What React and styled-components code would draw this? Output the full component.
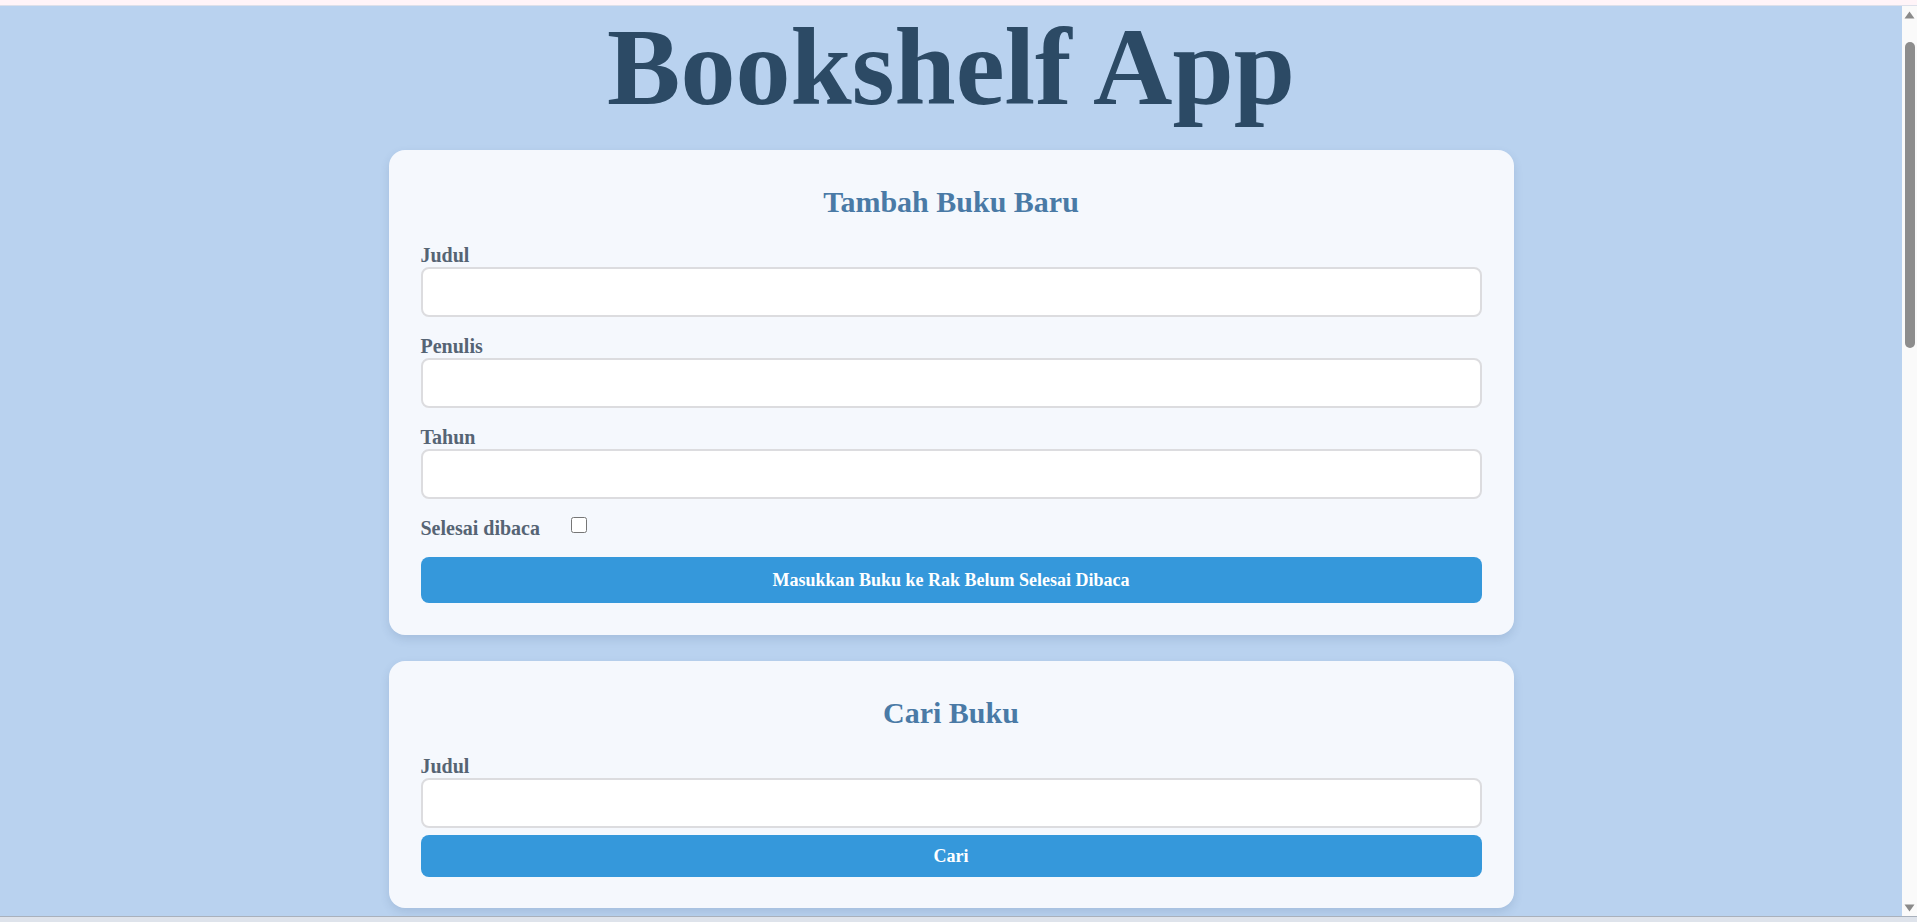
import React from "react";
import styled, { createGlobalStyle } from "styled-components";

const GlobalStyle = createGlobalStyle`
  html, body {
    margin: 0;
    padding: 0;
    height: 100%;
    overflow: hidden;
    background: #fff5f8;
  }
  body {
    font-family: "Liberation Serif", "Times New Roman", serif;
  }
  * { box-sizing: border-box; }
`;

const Frame = styled.div`
  display: flex;
  flex-direction: column;
  height: 100vh;
`;

const TopStrip = styled.div`
  flex: 0 0 6px;
  background: #fff4f8;
  border-bottom: 1px solid #dde0ea;
`;

const BottomStrip = styled.div`
  flex: 1 1 auto;
  background: #dee3eb;
  border-top: 1px solid #a9b1bc;
`;

const Viewport = styled.div`
  flex: 0 0 910px;
  display: flex;
  min-height: 0;
`;

const Page = styled.main`
  flex: 1 1 auto;
  background: #b9d2ef;
  overflow: hidden;
  display: flex;
  flex-direction: column;
  align-items: center;
`;

const Title = styled.h1`
  margin: 0;
  font-size: 110px;
  line-height: 122px;
  font-weight: 700;
  color: #2c4a65;
  text-align: center;
  white-space: nowrap;
`;

const Card = styled.section`
  width: 1125px;
  max-width: 100%;
  margin-top: ${(p) => p.$gap}px;
  padding: 32px 32px ${(p) => p.$bottom}px;
  background: #f5f8fd;
  border-radius: 16px;
  box-shadow: 0 4px 10px rgba(40, 70, 110, 0.14);
  flex-shrink: 0;
`;

const CardHeading = styled.h2`
  margin: 0 0 21px;
  font-size: 30px;
  line-height: 40px;
  font-weight: 700;
  color: #4a7aa6;
  text-align: center;
`;

const Field = styled.div`
  margin-bottom: ${(p) => p.$gap}px;
`;

const Label = styled.label`
  display: block;
  font-size: 20px;
  line-height: 24px;
  font-weight: 700;
  color: #566474;
`;

const TextInput = styled.input`
  display: block;
  width: 100%;
  height: 50px;
  padding: 0 12px;
  border: 2px solid #dcdcdf;
  border-radius: 8px;
  background: #ffffff;
  font-family: inherit;
  font-size: 18px;
  outline: none;
`;

const CheckRow = styled.div`
  display: flex;
  align-items: flex-start;
  gap: 31px;
  height: 24px;
  margin-bottom: 17px;
`;

const CheckLabel = styled.label`
  font-size: 20px;
  line-height: 24px;
  font-weight: 700;
  color: #566474;
`;

const Checkbox = styled.input`
  width: 16px;
  height: 16px;
  margin: 1px 0 0;
`;

const SubmitButton = styled.button`
  display: block;
  width: 100%;
  height: ${(p) => p.$height}px;
  margin-top: ${(p) => p.$top || 0}px;
  border: none;
  border-radius: 8px;
  background: #3598db;
  color: #ffffff;
  font-family: inherit;
  font-size: 18px;
  font-weight: 700;
  cursor: pointer;
`;

const Scrollbar = styled.div`
  flex: 0 0 15px;
  background: #fafafa;
  display: flex;
  flex-direction: column;
`;

const ArrowButton = styled.div`
  flex: 0 0 17px;
  display: flex;
  align-items: center;
  justify-content: center;
`;

const Track = styled.div`
  flex: 1 1 auto;
  padding: 19px 2px 0 3px;
`;

const Thumb = styled.div`
  width: 10px;
  height: 306px;
  border-radius: 5px;
  background: #8d8d8d;
`;

const Arrow = ({ down }) => (
  <svg width="11" height="8" viewBox="0 0 11 8">
    <path d={down ? "M0.5 0.5 L10.5 0.5 L5.5 7.5 Z" : "M0.5 7.5 L10.5 7.5 L5.5 0.5 Z"} fill="#8a8a8a" />
  </svg>
);

export default function App() {
  return (
    <>
      <GlobalStyle />
      <Frame>
        <TopStrip />
        <Viewport>
          <Page>
            <Title>Bookshelf App</Title>

            <Card $gap={22} $bottom={32}>
              <CardHeading>Tambah Buku Baru</CardHeading>
              <Field $gap={17}>
                <Label htmlFor="bookFormTitle">Judul</Label>
                <TextInput id="bookFormTitle" type="text" />
              </Field>
              <Field $gap={17}>
                <Label htmlFor="bookFormAuthor">Penulis</Label>
                <TextInput id="bookFormAuthor" type="text" />
              </Field>
              <Field $gap={17}>
                <Label htmlFor="bookFormYear">Tahun</Label>
                <TextInput id="bookFormYear" type="number" />
              </Field>
              <CheckRow>
                <CheckLabel htmlFor="bookFormIsComplete">Selesai dibaca</CheckLabel>
                <Checkbox id="bookFormIsComplete" type="checkbox" />
              </CheckRow>
              <SubmitButton type="submit" $height={46}>
                Masukkan Buku ke Rak Belum Selesai Dibaca
              </SubmitButton>
            </Card>

            <Card $gap={26} $bottom={31}>
              <CardHeading>Cari Buku</CardHeading>
              <Field $gap={0}>
                <Label htmlFor="searchBookTitle">Judul</Label>
                <TextInput id="searchBookTitle" type="text" />
              </Field>
              <SubmitButton type="submit" $height={42} $top={7}>
                Cari
              </SubmitButton>
            </Card>
          </Page>
          <Scrollbar>
            <ArrowButton>
              <Arrow />
            </ArrowButton>
            <Track>
              <Thumb />
            </Track>
            <ArrowButton>
              <Arrow down />
            </ArrowButton>
          </Scrollbar>
        </Viewport>
        <BottomStrip />
      </Frame>
    </>
  );
}
